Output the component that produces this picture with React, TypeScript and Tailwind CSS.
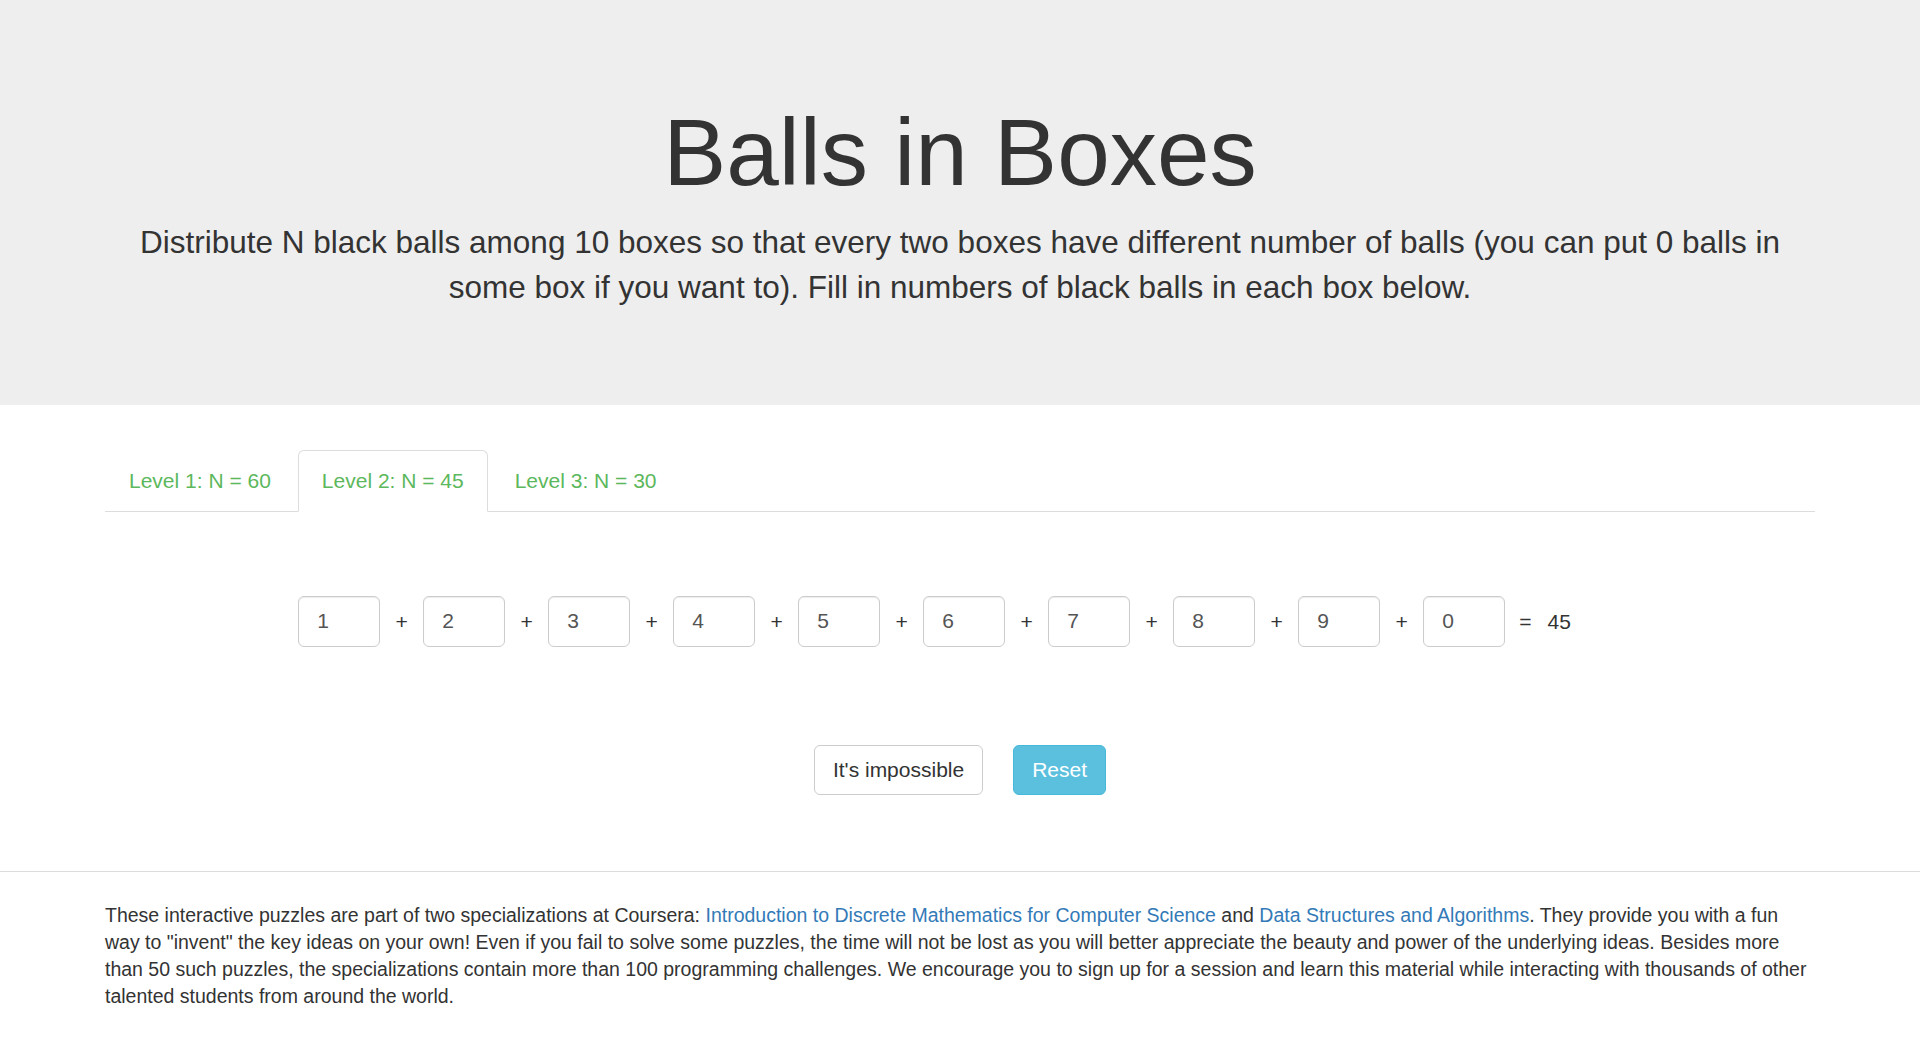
import React, { useState } from 'react';

const levels = [
    { label: 'Level 1: N = 60', n: 60 },
    { label: 'Level 2: N = 45', n: 45 },
    { label: 'Level 3: N = 30', n: 30 },
];

export default function App() {
    const [active, setActive] = useState(1);
    const [values, setValues] = useState<string[]>(['1', '2', '3', '4', '5', '6', '7', '8', '9', '0']);

    const sum = values.reduce((acc, v) => acc + (parseInt(v, 10) || 0), 0);

    const update = (i: number, v: string) => {
        const next = [...values];
        next[i] = v;
        setValues(next);
    };

    return (
        <div className="min-h-screen bg-white font-['Liberation_Sans',Arial,sans-serif] text-[#333]">
            <div className="bg-[#eee] pt-[101px] pb-[72px]">
                <div className="mx-auto w-[1710px] text-center">
                    <h1 className="text-[94.5px] leading-[1.1] mb-[15px]">Balls in Boxes</h1>
                    <p className="text-[31.5px] leading-[45px] mb-[23px]">
                        Distribute N black balls among 10 boxes so that every two boxes have different number of balls (you can put 0 balls in some box if you want to). Fill in numbers of black balls in each box below.
                    </p>
                </div>
            </div>

            <div className="mx-auto w-[1710px] pt-[45px]">
                <ul className="flex border-b border-[#ddd]">
                    {levels.map((l, i) => (
                        <li key={l.label} className="mr-[3px] -mb-px">
                            <button
                                onClick={() => setActive(i)}
                                className={
                                    i === active
                                        ? 'block px-[23px] py-[15px] text-[21px] leading-[30px] text-[#5cb85c] bg-white border border-[#ddd] border-b-transparent rounded-t-[6px]'
                                        : 'block px-[23px] py-[15px] text-[21px] leading-[30px] text-[#5cb85c] border border-transparent rounded-t-[6px] hover:bg-[#eee]'
                                }
                            >
                                {l.label}
                            </button>
                        </li>
                    ))}
                </ul>

                <div className="flex items-center justify-center pt-[84px] pr-[51px] text-[21px]">
                    {values.map((v, i) => (
                        <React.Fragment key={i}>
                            {i > 0 && <span className="w-[43px] text-center">+</span>}
                            <input
                                value={v}
                                onChange={(e) => update(i, e.target.value)}
                                className="w-[82px] h-[51px] px-[18px] border border-[#ccc] rounded-[6px] text-[21px] text-[#555] shadow-[inset_0_1px_1px_rgba(0,0,0,0.075)] outline-none"
                            />
                        </React.Fragment>
                    ))}
                    <span className="ml-[14px]">=</span>
                    <span className="ml-[16px]">{sum}</span>
                </div>

                <div className="flex justify-center gap-[30px] pt-[98px] pb-[76px]">
                    <button className="h-[50px] px-[18px] text-[21px] border border-[#ccc] rounded-[6px] bg-white text-[#333]">
                        It's impossible
                    </button>
                    <button className="h-[50px] px-[18px] text-[21px] border border-[#46b8da] rounded-[6px] bg-[#5bc0de] text-white">
                        Reset
                    </button>
                </div>
            </div>

            <div className="border-t border-[#ddd] pt-[30px] pb-[20px]">
                <p className="mx-auto w-[1710px] text-[19.5px] leading-[27px]">
                    These interactive puzzles are part of two specializations at Coursera:{' '}
                    <a className="text-[#337ab7]" href="#">Introduction to Discrete Mathematics for Computer Science</a> and{' '}
                    <a className="text-[#337ab7]" href="#">Data Structures and Algorithms</a>. They provide you with a fun way to "invent" the key ideas on your own! Even if you fail to solve some puzzles, the time will not be lost as you will better appreciate the beauty and power of the underlying ideas. Besides more than 50 such puzzles, the specializations contain more than 100 programming challenges. We encourage you to sign up for a session and learn this material while interacting with thousands of other talented students from around the world.
                </p>
            </div>
        </div>
    );
}
